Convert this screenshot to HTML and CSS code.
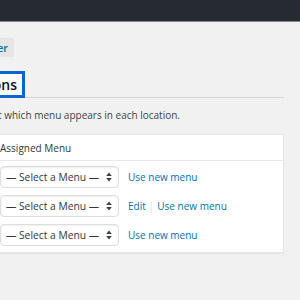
FILE: index.html
```html
<!DOCTYPE html>
<html>
<head>
<meta charset="utf-8">
<link rel="stylesheet" href="styles.css">
</head>
<body>
<div class="topbar"></div>
<div class="page">
  <div class="head">
    <h1 class="title">Menus</h1>
    <a class="btn">Manage in Customizer</a>
  </div>
  <div class="tabs">
    <div class="tabs-inner">
      <a class="tab">Edit Menus</a>
      <a class="tab active">Manage Locations</a>
    </div>
  </div>
  <p class="desc">Your theme supports 3 menus. Select which menu appears in each location.</p>
  <div class="table">
    <div class="thead">
      <div class="th loc">Theme Location</div>
      <div class="th">Assigned Menu</div>
    </div>
    <div class="tbody">
      <div class="tr">
        <div class="td loc">Primary Menu</div>
        <div class="td">
          <span class="select"><span class="sel-text">— Select a Menu —</span><svg class="arrows" width="6" height="10" viewBox="0 0 6 10"><path d="M3 0.5L5.8 4H0.2Z M3 9.5L5.8 6H0.2Z" fill="#3c4046"/></svg></span>
          <span class="links"><a class="link">Use new menu</a></span>
        </div>
      </div>
      <div class="tr">
        <div class="td loc">Social Links Menu</div>
        <div class="td">
          <span class="select"><span class="sel-text">— Select a Menu —</span><svg class="arrows" width="6" height="10" viewBox="0 0 6 10"><path d="M3 0.5L5.8 4H0.2Z M3 9.5L5.8 6H0.2Z" fill="#3c4046"/></svg></span>
          <span class="links"><a class="link">Edit</a><span class="sep">|</span><a class="link">Use new menu</a></span>
        </div>
      </div>
      <div class="tr">
        <div class="td loc">Footer Menu</div>
        <div class="td">
          <span class="select"><span class="sel-text">— Select a Menu —</span><svg class="arrows" width="6" height="10" viewBox="0 0 6 10"><path d="M3 0.5L5.8 4H0.2Z M3 9.5L5.8 6H0.2Z" fill="#3c4046"/></svg></span>
          <span class="links"><a class="link">Use new menu</a></span>
        </div>
      </div>
    </div>
  </div>
</div>
</body>
</html>
```
FILE: styles.css
```css
html, body {
  margin: 0;
  padding: 0;
  background: #f1f1f1;
  font-family: "Open Sans", "Noto Sans", sans-serif;
  font-size: 10px;
  color: #444;
  overflow: hidden;
  width: 300px;
  height: 300px;
}
.topbar {
  height: 21px;
  background: #262a31;
  border-bottom: 1px solid #85888c;
}
.page {
  margin-left: -220px;
  width: 504px;
}
.head {
  margin-top: 16px;
  width: 234px;
  height: 19px;
  display: flex;
  justify-content: flex-end;
  align-items: center;
  gap: 8px;
}
.title {
  margin: 0;
  font-size: 18px;
  font-weight: 400;
  color: #23282d;
  line-height: 19px;
}
.btn {
  height: 19px;
  display: inline-flex;
  align-items: center;
  padding: 0 6px 0 7px;
  background: #e6e6e6;
  color: #0073aa;
  font-weight: 600;
  font-size: 11px;
  white-space: nowrap;
}
.tabs {
  margin-top: 14px;
  border-bottom: 1px solid #d8d8d8;
  height: 26px;
}
.tabs-inner {
  width: 245px;
  display: flex;
  justify-content: flex-end;
  gap: 6px;
}
.tab {
  box-sizing: border-box;
  height: 27px;
  display: inline-flex;
  align-items: center;
  padding: 0 5px 0 10px;
  font-size: 14px;
  font-weight: 600;
  color: #555;
  white-space: nowrap;
  border: 1px solid #ccc;
  background: #e5e5e5;
}
.tab.active {
  border: 3px solid #0b63ce;
  background: #fbfbfb;
  color: #111;
}
.desc {
  margin: 8px 0 0;
  width: 400px;
  line-height: 18px;
  text-align: right;
  white-space: nowrap;
  color: #444;
}
.table {
  margin-top: 10px;
  box-sizing: border-box;
  width: 504px;
  background: #fff;
  border: 1px solid #e5e5e5;
  box-shadow: 0 1px 1px rgba(0,0,0,.04);
}
.thead {
  display: grid;
  grid-template-columns: 219px 1fr;
  height: 25px;
  align-items: center;
  border-bottom: 1px solid #e8e8e8;
}
.th {
  font-size: 10px;
  color: #32373c;
  white-space: nowrap;
}
.tbody {
  padding: 5px 0 6px;
  display: flex;
  flex-direction: column;
  gap: 7px;
}
.tr {
  display: grid;
  grid-template-columns: 219px 1fr;
  height: 22px;
  align-items: center;
}
.td {
  display: flex;
  align-items: center;
  white-space: nowrap;
}
.loc {
  padding-left: 10px;
}
.select {
  box-sizing: border-box;
  width: 119px;
  height: 22px;
  border: 1px solid #ddd;
  border-radius: 4px;
  background: #fff;
  box-shadow: inset 0 1px 2px rgba(0,0,0,.07);
  display: flex;
  align-items: center;
  padding: 0 3px 0 5px;
  color: #32373c;
  font-size: 10.3px;
}
.sel-text {
  flex: 1;
}
.arrows {
  margin-right: 3px;
}
.links {
  margin-left: 9px;
  display: flex;
  align-items: center;
}
.link {
  color: #0073aa;
}
.sep {
  color: #ddd;
  margin: 0 3px 0 3px;
}
```
